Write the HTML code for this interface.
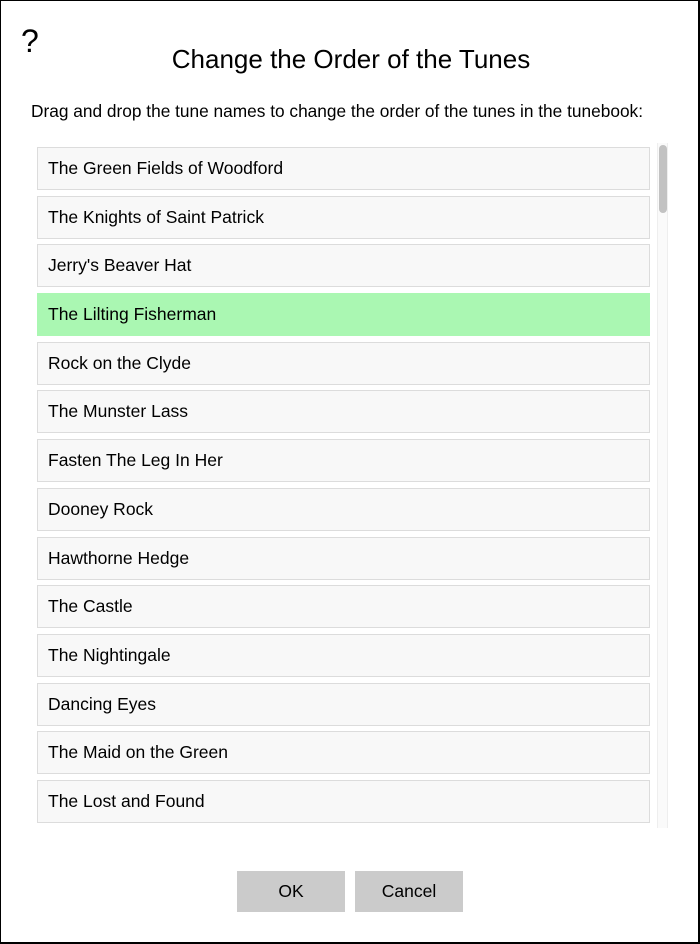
<!DOCTYPE html>
<html><head><style>
html,body{margin:0;padding:0;}
body{width:700px;height:944px;position:relative;background:#fff;font-family:"Liberation Sans",Arial,sans-serif;color:#000;overflow:hidden;}
.frame{position:absolute;left:0;top:0;width:697px;height:941px;border:1px solid #000;border-right-width:2px;border-bottom-width:2px;}
.q{position:absolute;left:21px;top:23px;font-size:32px;}
.title{position:absolute;left:0;width:702px;text-align:center;top:44px;font-size:26px;}
.instr{position:absolute;left:31px;top:101px;font-size:17.3px;}
.list{position:absolute;left:37px;top:147px;width:613px;height:676px;overflow:hidden;}
.item{box-sizing:border-box;height:43px;margin-bottom:5.7px;border:1px solid #dcdcdc;background:#f8f8f8;padding-left:10px;line-height:41px;font-size:17.5px;}
.item.sel{background:#aaf7b2;border-color:#aaf7b2;}
.track{position:absolute;left:657px;top:143px;width:11px;height:685px;background:#fafafa;border-left:1px solid #eee;border-right:1px solid #eee;box-sizing:border-box;}
.thumb{position:absolute;left:659px;top:145px;width:8px;height:68px;background:#c2c2c2;border-radius:4px;}
.btn{position:absolute;top:871px;height:41px;width:108px;background:#cbcbcb;text-align:center;line-height:41px;font-size:17.5px;}
</style></head><body>
<div class="frame"></div>
<div class="q">?</div>
<div class="title">Change the Order of the Tunes</div>
<div class="instr">Drag and drop the tune names to change the order of the tunes in the tunebook:</div>
<div class="list">
<div class="item">The Green Fields of Woodford</div>
<div class="item">The Knights of Saint Patrick</div>
<div class="item">Jerry's Beaver Hat</div>
<div class="item sel">The Lilting Fisherman</div>
<div class="item">Rock on the Clyde</div>
<div class="item">The Munster Lass</div>
<div class="item">Fasten The Leg In Her</div>
<div class="item">Dooney Rock</div>
<div class="item">Hawthorne Hedge</div>
<div class="item">The Castle</div>
<div class="item">The Nightingale</div>
<div class="item">Dancing Eyes</div>
<div class="item">The Maid on the Green</div>
<div class="item">The Lost and Found</div>
<div class="item">The Boys of Ballisodare</div>
</div>
<div class="track"></div>
<div class="thumb"></div>
<div class="btn" style="left:237px">OK</div>
<div class="btn" style="left:355px">Cancel</div>
</body></html>
